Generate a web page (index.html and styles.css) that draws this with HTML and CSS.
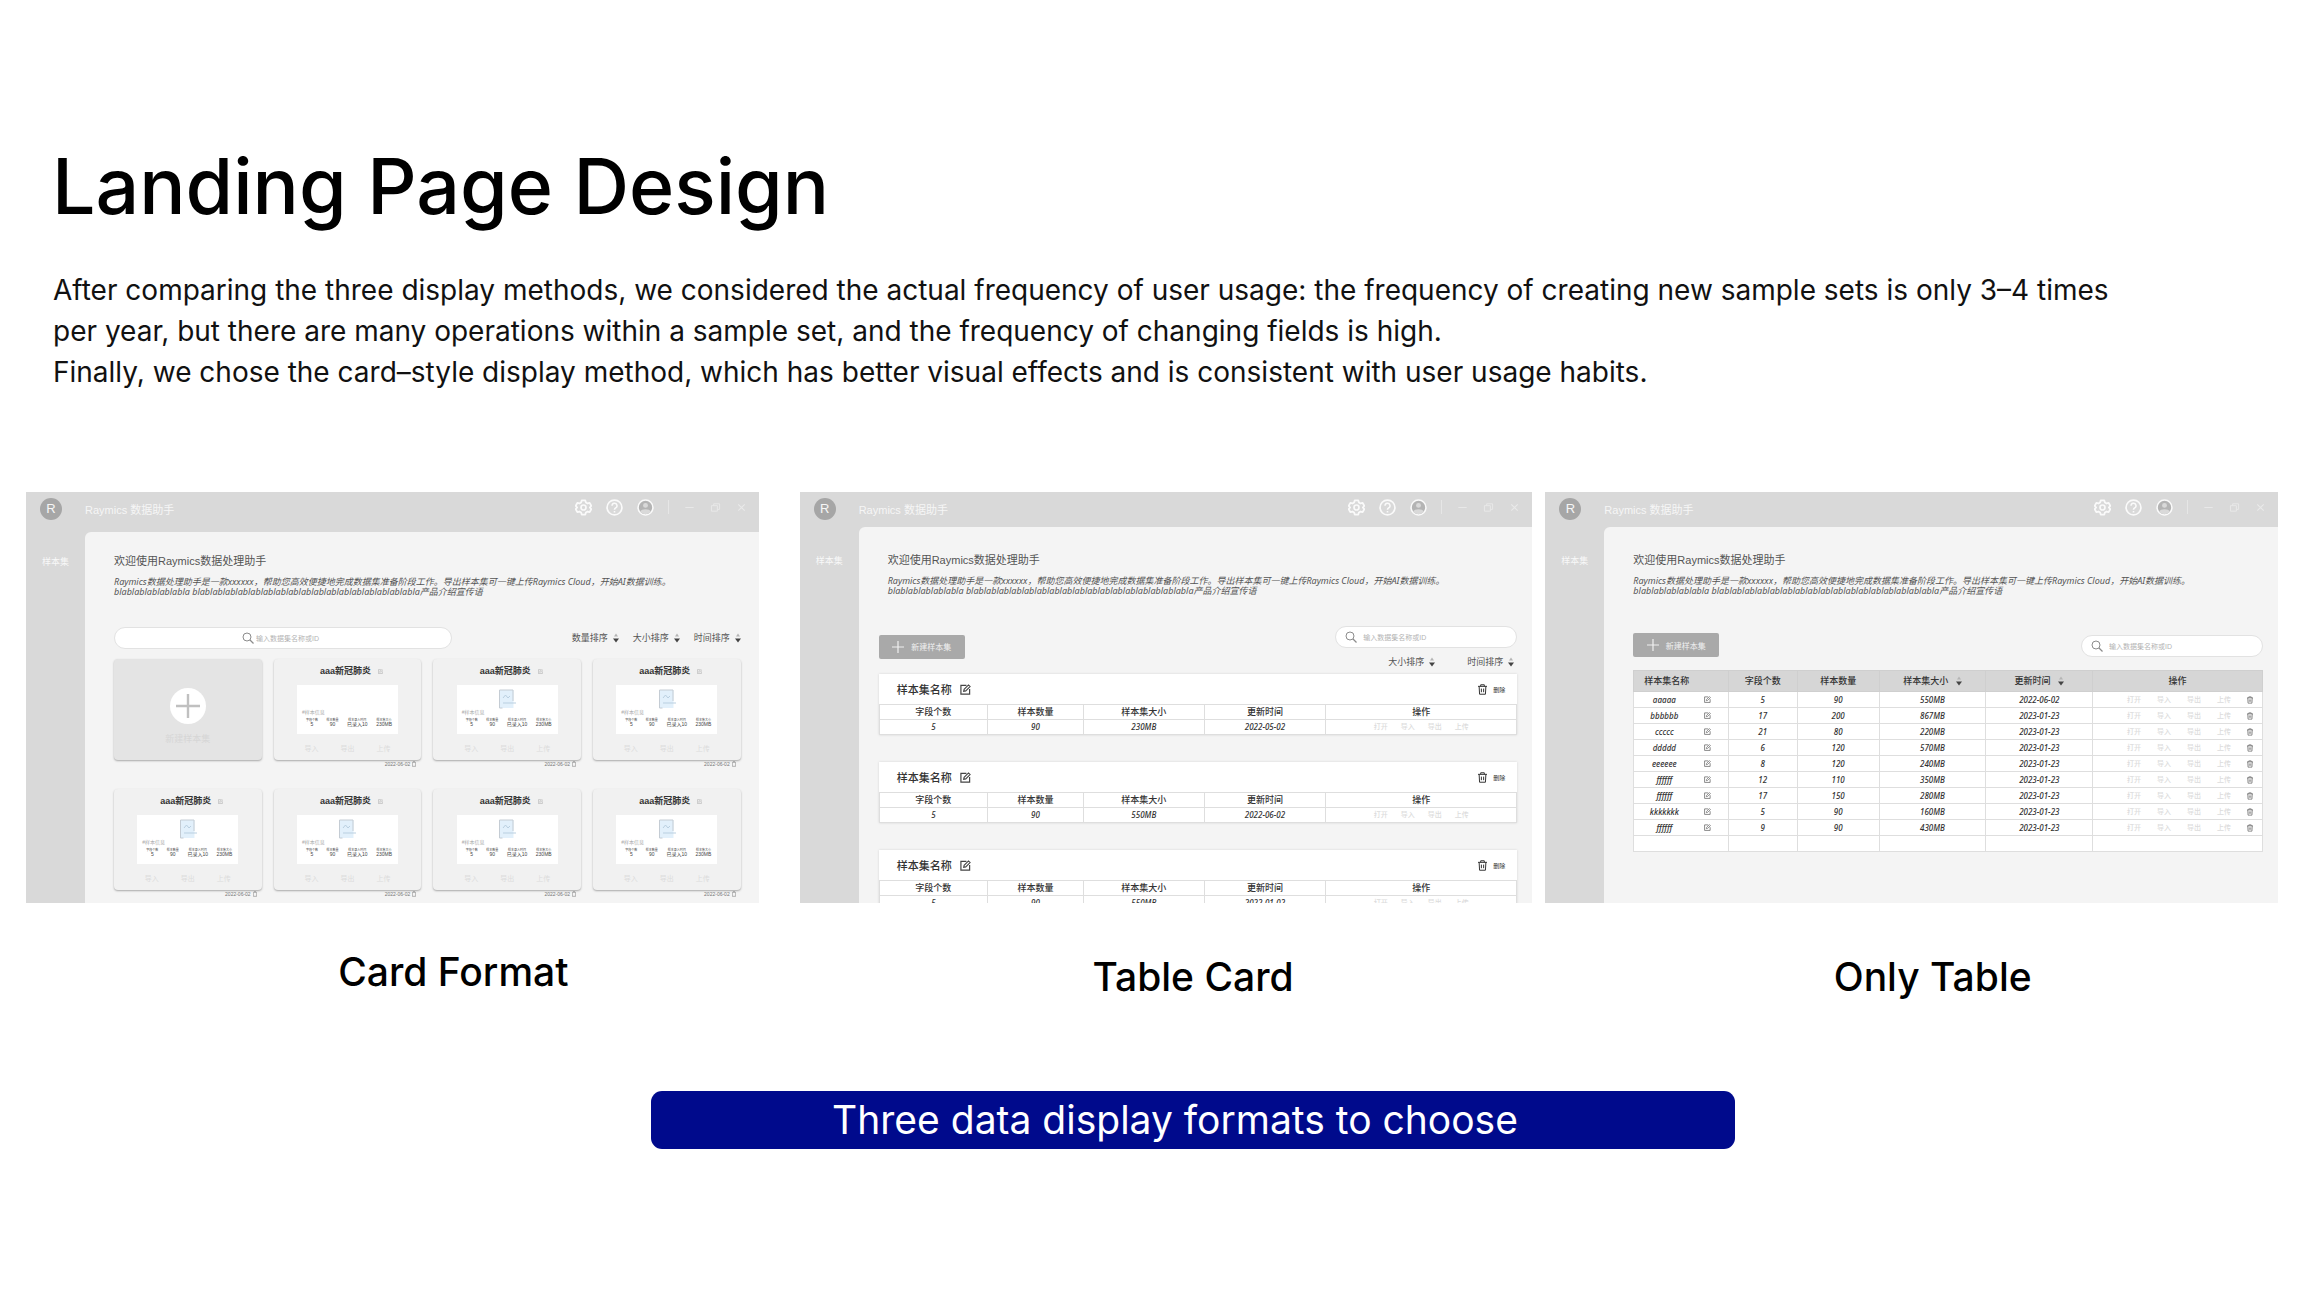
FILE: index.html
```
<!DOCTYPE html>
<html lang="en">

<head>
    <meta charset="utf-8">
    <title>Landing Page Design</title>
    <link rel="stylesheet" href="styles.css">
</head>

<body>
    <svg class="sprite" aria-hidden="true">
        <symbol id="gear" viewBox="0 0 24 24">
            <path d="M9.5 2h5l.9 3 2.2 1.3 3.1-.8 2.3 4.2L21 12l2 2.3-2.3 4.2-3.1-.8-2.2 1.3-.9 3h-5l-.9-3-2.2-1.3-3.1.8L1 14.3 3 12 1 9.7l2.3-4.2 3.1.8L8.6 5z" fill="none" stroke="currentColor" stroke-width="2.6" stroke-linejoin="round" />
            <circle cx="12" cy="12" r="3.5" fill="none" stroke="currentColor" stroke-width="2.4" />
        </symbol>
        <symbol id="help" viewBox="0 0 24 24">
            <circle cx="12" cy="12" r="10.5" fill="none" stroke="currentColor" stroke-width="2.4" />
            <path d="M8.5 9.5a3.5 3.5 0 1 1 5 3.2c-1 .5-1.5 1-1.5 2.3M12 17v2" fill="none" stroke="currentColor" stroke-width="2.2" />
        </symbol>
        <symbol id="user" viewBox="0 0 24 24">
            <circle cx="12" cy="12" r="10.5" fill="#b4b4b4" stroke="currentColor" stroke-width="2.2" />
            <circle cx="12" cy="9" r="3.5" fill="#d9d9d9" />
            <path d="M4.5 17.5c2-4 13-4 15 0-3 5-12 5-15 0z" fill="#d9d9d9" />
        </symbol>
        <symbol id="minimize" viewBox="0 0 24 24">
            <path d="M3 12h18" stroke="currentColor" stroke-width="2" />
        </symbol>
        <symbol id="restore" viewBox="0 0 24 24">
            <path d="M3 8h13v12H3zM8 8V4h13v12h-5" fill="none" stroke="currentColor" stroke-width="2" />
        </symbol>
        <symbol id="close" viewBox="0 0 24 24">
            <path d="M5 5l14 14M19 5L5 19" stroke="currentColor" stroke-width="2.4" />
        </symbol>
        <symbol id="search" viewBox="0 0 24 24">
            <circle cx="10" cy="10" r="8" fill="none" stroke="currentColor" stroke-width="2" />
            <path d="M16 16l7 7" stroke="currentColor" stroke-width="2.6" />
        </symbol>
        <symbol id="sort" viewBox="0 0 12 20">
            <path d="M6 1l4 6H2z" fill="#b4b4b4" />
            <path d="M6 19L0 11h12z" fill="#444" />
        </symbol>
        <symbol id="plus" viewBox="0 0 24 24">
            <path d="M12 0v24M0 12h24" stroke="currentColor" stroke-width="2.4" />
        </symbol>
        <symbol id="edit" viewBox="0 0 24 24">
            <path d="M14 3H2v19h19V11" fill="none" stroke="currentColor" stroke-width="2.6" />
            <path d="M8 16l1-4.5L18.5 2 22 5.5 12.5 15z" fill="none" stroke="currentColor" stroke-width="2.4" />
        </symbol>
        <symbol id="trash" viewBox="0 0 20 24">
            <path d="M0 5h20M6 5V1.5h8V5M2.5 5l1 17.5h13l1-17.5M7.5 10v8M12.5 10v8" fill="none" stroke="currentColor" stroke-width="2.2" />
        </symbol>
        <symbol id="doc" viewBox="0 0 36 40">
            <path d="M3 2h28v36H3z" fill="#e2f0fb" />
            <path d="M30 24V2H3v36h6" fill="none" stroke="#c4ccd4" stroke-width="2" />
            <path d="M10 28h26M10 18l5-6 5 6 4-4" fill="none" stroke="#b9cfe0" stroke-width="2" />
        </symbol>
        <symbol id="clipboard" viewBox="0 0 12 16">
            <path d="M1 3h10v12H1zM3 1h6" fill="none" stroke="currentColor" stroke-width="1.6" />
        </symbol>
    </svg>

    <h1>Landing Page Design</h1>
    <p class="lead">
        After comparing the three display methods, we considered the actual frequency of user usage: the frequency of creating new sample sets is only 3–4 times<br>
        per year, but there are many operations within a sample set, and the frequency of changing fields is high.<br>
        Finally, we chose the card–style display method, which has better visual effects and is consistent with user usage habits.
    </p>

    <div class="formats">
        <figure class="format format-card">
            <div class="app" lang="zh-CN">
                <header class="app-header">
                    <span class="logo">R</span>
                    <span class="app-name">Raymics 数据助手</span>
                    <div class="tools"></div>
                </header>
                <nav class="app-nav"><a href="#">样本集</a></nav>
                <section class="panel">
                    <div class="intro">
                        <h2>欢迎使用Raymics数据处理助手</h2>
                        <p>Raymics数据处理助手是一款xxxxxx，帮助您高效便捷地完成数据集准备阶段工作。导出样本集可一键上传Raymics Cloud，开始AI数据训练。<br>
                            blablablablablabla blablablablablablablablablablablablablablablablablabla产品介绍宣传语</p>
                    </div>
                    <div class="toolbar">
                        <label class="search">
                            <svg><use href="#search" /></svg>
                            <input type="text" placeholder="输入数据集名称或ID" aria-label="输入数据集名称或ID">
                        </label>
                        <div class="sorts">
                            <button class="sort">数量排序 <svg><use href="#sort" /></svg></button>
                            <button class="sort">大小排序 <svg><use href="#sort" /></svg></button>
                            <button class="sort">时间排序 <svg><use href="#sort" /></svg></button>
                        </div>
                    </div>
                    <div class="cards" id="cards">
                        <button class="add-card">
                            <span class="add-circle"><svg><use href="#plus" /></svg></span>
                            新建样本集
                        </button>
                    </div>
                </section>
            </div>
            <figcaption>Card Format</figcaption>
        </figure>

        <figure class="format format-table-card">
            <div class="app" lang="zh-CN">
                <header class="app-header">
                    <span class="logo">R</span>
                    <span class="app-name">Raymics 数据助手</span>
                    <div class="tools"></div>
                </header>
                <nav class="app-nav"><a href="#">样本集</a></nav>
                <section class="panel">
                    <div class="intro">
                        <h2>欢迎使用Raymics数据处理助手</h2>
                        <p>Raymics数据处理助手是一款xxxxxx，帮助您高效便捷地完成数据集准备阶段工作。导出样本集可一键上传Raymics Cloud，开始AI数据训练。<br>
                            blablablablablabla blablablablablablablablablablablablablablablablablabla产品介绍宣传语</p>
                    </div>
                    <div class="toolbar">
                        <button class="new-set"><svg><use href="#plus" /></svg>新建样本集</button>
                        <div class="filters">
                            <label class="search">
                                <svg><use href="#search" /></svg>
                                <input type="text" placeholder="输入数据集名称或ID" aria-label="输入数据集名称或ID">
                            </label>
                            <div class="sorts">
                                <button class="sort">大小排序 <svg><use href="#sort" /></svg></button>
                                <button class="sort">时间排序 <svg><use href="#sort" /></svg></button>
                            </div>
                        </div>
                    </div>
                    <div id="table-cards"></div>
                </section>
            </div>
            <figcaption>Table Card</figcaption>
        </figure>

        <figure class="format format-table">
            <div class="app" lang="zh-CN">
                <header class="app-header">
                    <span class="logo">R</span>
                    <span class="app-name">Raymics 数据助手</span>
                    <div class="tools"></div>
                </header>
                <nav class="app-nav"><a href="#">样本集</a></nav>
                <section class="panel">
                    <div class="intro">
                        <h2>欢迎使用Raymics数据处理助手</h2>
                        <p>Raymics数据处理助手是一款xxxxxx，帮助您高效便捷地完成数据集准备阶段工作。导出样本集可一键上传Raymics Cloud，开始AI数据训练。<br>
                            blablablablablabla blablablablablablablablablablablablablablablablablabla产品介绍宣传语</p>
                    </div>
                    <div class="toolbar">
                        <button class="new-set"><svg><use href="#plus" /></svg>新建样本集</button>
                        <label class="search">
                            <svg><use href="#search" /></svg>
                            <input type="text" placeholder="输入数据集名称或ID" aria-label="输入数据集名称或ID">
                        </label>
                    </div>
                    <table class="list">
                        <colgroup>
                            <col class="c-name">
                            <col class="c-fields">
                            <col class="c-count">
                            <col class="c-size">
                            <col class="c-date">
                            <col>
                        </colgroup>
                        <thead>
                            <tr>
                                <th class="name-head">样本集名称</th>
                                <th>字段个数</th>
                                <th>样本数量</th>
                                <th>样本集大小 <svg class="th-sort"><use href="#sort" /></svg></th>
                                <th>更新时间 <svg class="th-sort"><use href="#sort" /></svg></th>
                                <th>操作</th>
                            </tr>
                        </thead>
                        <tbody id="rows"></tbody>
                    </table>
                </section>
            </div>
            <figcaption>Only Table</figcaption>
        </figure>
    </div>

    <div class="banner-row">
        <p class="banner">Three data display formats to choose</p>
    </div>

    <script src="script.js"></script>
</body>

</html>
```
FILE: styles.css
```
* {
    box-sizing: border-box;
}

body {
    margin: 0;
    padding: 146px 26px 0;
    background-color: #fff;
    color: #000;
    font-family: Inter, "Noto Sans CJK SC", sans-serif;
}

h1,
h2,
p,
figure {
    margin: 0;
}

button {
    border: none;
    padding: 0;
    background: none;
    font-family: inherit;
    cursor: pointer;
}

svg {
    display: block;
    flex: none;
}

.sprite {
    display: none;
}

h1 {
    padding-left: 26px;
    font-size: 77px;
    line-height: 80px;
    font-weight: 500;
}

.lead {
    padding: 44px 0 0 27px;
    font-size: 28px;
    line-height: 41px;
    color: #111;
    white-space: nowrap;
}

/* three mock windows */
.formats {
    display: flex;
    align-items: flex-start;
    margin-top: 99px;
}

.format {
    flex: 1;
    min-width: 0;
}

.format-table-card {
    margin-left: 41px;
}

.format-table {
    margin-left: 13px;
}

figcaption {
    padding-top: 51px;
    font-size: 39px;
    line-height: 46px;
    font-weight: 500;
    text-align: center;
}

.format-card figcaption {
    padding-top: 46px;
    padding-left: 122px;
}

.format-table-card figcaption {
    padding-left: 54px;
}

.format-table figcaption {
    padding-left: 42px;
}

.app {
    display: grid;
    grid-template-columns: 59px 1fr;
    grid-template-rows: 35px 1fr;
    aspect-ratio: 732 / 411;
    overflow: hidden;
    background-color: #d9d9d9;
    font-family: "Liberation Sans", "Noto Sans CJK SC", sans-serif;
}

.format-card .app {
    grid-template-rows: 40px 1fr;
}

.app-header {
    grid-column: 1 / 3;
    display: flex;
    align-items: flex-start;
    padding: 6px 12px 0 14px;
    color: #f6f6f6;
}

.logo {
    width: 22px;
    height: 22px;
    border-radius: 50%;
    background-color: #a6a6a6;
    font-size: 13px;
    line-height: 22px;
    text-align: center;
}

.app-name {
    margin-left: 23px;
    font-size: 11px;
    line-height: 24px;
}

.tools {
    display: flex;
    align-items: center;
    gap: 14px;
    height: 18px;
    margin-left: auto;
}

.tools button {
    color: #fafafa;
}

.tools svg {
    width: 17px;
    height: 17px;
}

.tools .window-button {
    margin-left: 1px;
    color: #e9e9e9;
}

.tools .window-button svg {
    width: 11px;
    height: 11px;
}

.divider {
    width: 1px;
    height: 14px;
    background-color: #e6e6e6;
}

.app-nav {
    padding-top: 27px;
    text-align: center;
    font-size: 9px;
    line-height: 14px;
}

.format-card .app-nav {
    padding-top: 23px;
}

.app-nav a {
    color: #f8f8f8;
    text-decoration: none;
}

.panel {
    min-width: 0;
    min-height: 0;
    padding: 25px 15px 0 29px;
    border-top-left-radius: 6px;
    background-color: #f4f4f4;
}

.format-card .panel {
    padding: 21px 18px 0 29px;
}

.format-table-card .panel {
    padding-left: 20px;
}

.format-table-card .intro {
    padding-left: 9px;
}

.intro {
    color: #555;
    white-space: nowrap;
}

.intro h2 {
    font-size: 11px;
    line-height: 16px;
    font-weight: normal;
}

.intro p {
    margin-top: 8px;
    font-family: "Noto Sans", "Noto Sans CJK SC", sans-serif;
    font-size: 9px;
    font-style: italic;
    line-height: 10px;
}

/* toolbar */
.toolbar {
    display: flex;
    align-items: center;
    justify-content: space-between;
    padding: 30px 0 10px;
}

.format-table-card .toolbar {
    padding-bottom: 7px;
}

.format-table .toolbar {
    align-items: flex-end;
    padding: 37px 0 13px;
}

.search {
    display: flex;
    align-items: center;
    gap: 6px;
    width: 182px;
    height: 22px;
    padding: 0 9px;
    border: 1px solid #e2e2e2;
    border-radius: 11px;
    background-color: #fff;
    color: #8c8c8c;
}

.format-card .search {
    justify-content: center;
    gap: 2px;
    width: 338px;
}

.search svg {
    width: 12px;
    height: 12px;
}

.search input {
    width: 68px;
    border: none;
    padding: 0;
    background: none;
    font-family: inherit;
    font-size: 7px;
    outline: none;
}

.search input::placeholder {
    color: #b4b4b4;
}

.sorts {
    display: flex;
    justify-content: flex-end;
    gap: 14px;
}

.format-table-card .sorts {
    gap: 32px;
    padding: 9px 3px 0 0;
}

.sort {
    display: flex;
    align-items: center;
    gap: 5px;
    color: #555;
    font-size: 9px;
    line-height: 10px;
}

.sort svg {
    width: 6px;
    height: 10px;
}

.new-set {
    display: flex;
    align-items: center;
    justify-content: center;
    gap: 7px;
    width: 86px;
    height: 24px;
    border-radius: 2px;
    background-color: #a9a9a9;
    color: #f0f0f0;
    font-size: 8px;
}

.new-set svg {
    width: 12px;
    height: 12px;
}

/* card format */
.cards {
    display: grid;
    grid-template-columns: repeat(4, 1fr);
    gap: 12px;
}

.add-card,
.card {
    height: 101px;
    border-radius: 4px;
    box-shadow: 0 1px 2px #a8a8a8;
}

.add-card {
    display: flex;
    flex-direction: column;
    align-items: center;
    gap: 8px;
    padding-top: 29px;
    background-color: #e4e4e4;
    color: #d6d6d6;
    font-size: 9px;
}

.add-circle {
    padding: 6px;
    border-radius: 50%;
    background-color: #fff;
    color: #c0c0c0;
}

.add-circle svg {
    width: 24px;
    height: 24px;
}

.card {
    display: flex;
    flex-direction: column;
    align-items: center;
    background-color: #f1f1f1;
}

.card h3 {
    display: flex;
    align-items: center;
    gap: 7px;
    margin: 5px 0 7px 8px;
    color: #333;
    font-size: 9px;
    line-height: 14px;
}

.card h3 svg {
    width: 5px;
    height: 5px;
    color: #aaa;
}

.info {
    display: grid;
    grid-template-rows: 24px 7px 1fr;
    width: 101px;
    height: 49px;
    padding: 0 5px;
    background-color: #fff;
}

.info svg {
    width: 18px;
    height: 20px;
    margin: 4px auto 0;
}

.info-label {
    color: #aaa;
    font-size: 5px;
    line-height: 6px;
}

.stats {
    display: flex;
    justify-content: space-between;
    margin: 0;
    padding: 2px 1px 0 4px;
    color: #444;
    text-align: center;
}

.stats dt {
    font-size: 3px;
    line-height: 4px;
}

.stats dd {
    margin: 0;
    font-size: 5px;
    line-height: 5px;
}

.card-links {
    display: flex;
    gap: 22px;
    padding-top: 9px;
    font-size: 7px;
    line-height: 11px;
}

.card-links a,
.ops a {
    color: #dcdcdc;
    text-decoration: none;
}

.card-date {
    display: flex;
    justify-content: flex-end;
    gap: 2px;
    height: 17px;
    padding: 1px 5px 0 0;
    color: #777;
    font-size: 5px;
    line-height: 7px;
}

.card-date svg {
    width: 4px;
    height: 6px;
}

/* tables */
table {
    width: 100%;
    border-collapse: collapse;
    table-layout: fixed;
    background-color: #fff;
}

th,
td {
    padding: 0;
    border: 1px solid #dedede;
    text-align: center;
    font-weight: 500;
}

th {
    color: #333;
    font-size: 9px;
    line-height: 15px;
}

td {
    color: #333;
    font-family: "Noto Sans", "Noto Sans CJK SC", sans-serif;
    font-size: 8px;
    font-style: italic;
    line-height: 15px;
}

.table-card {
    margin-bottom: 27px;
    box-shadow: 0 0 2px #d4d4d4;
}

.table-card th,
.table-card td {
    line-height: 14px;
}

.table-card-head {
    display: flex;
    align-items: center;
    height: 30px;
    padding: 0 12px 0 18px;
    background-color: #fff;
    color: #333;
}

.table-card-head h3 {
    margin: 0 8px 0 0;
    font-size: 11px;
    font-weight: 500;
}

.table-card-head .edit svg {
    width: 11px;
    height: 11px;
}

.delete {
    display: flex;
    align-items: center;
    gap: 6px;
    margin-left: auto;
    color: #333;
    font-size: 6px;
}

.delete svg {
    width: 9px;
    height: 11px;
}

.edit {
    color: #444;
}

.t-fields {
    width: 17%;
}

.t-count {
    width: 15%;
}

.t-size {
    width: 19%;
}

.t-date {
    width: 19%;
}

.ops {
    display: flex;
    justify-content: center;
    gap: 13px;
    font-size: 7px;
    font-style: normal;
}

.c-name {
    width: 15%;
}

.c-fields {
    width: 11%;
}

.c-count {
    width: 13%;
}

.c-size {
    width: 17%;
}

.c-date {
    width: 17%;
}

.list th {
    height: 21px;
    border-color: #cfcfcf;
    background-color: #d6d6d6;
}

.list th.name-head {
    padding-left: 10px;
    text-align: left;
}

.list td {
    height: 16px;
}

.th-sort {
    display: inline-block;
    width: 6px;
    height: 10px;
    margin-left: 5px;
    vertical-align: middle;
}

.name-cell {
    display: grid;
    grid-template-columns: 60px 26px;
    align-items: center;
}

.name-cell svg {
    width: 7px;
    height: 7px;
    margin: 0 auto;
    color: #666;
}

.list .ops {
    align-items: center;
    justify-content: flex-end;
    gap: 16px;
    padding-right: 9px;
}

.list .ops svg {
    width: 6px;
    height: 8px;
    color: #555;
}

/* banner */
.banner-row {
    padding: 91px 0 60px 82px;
}

.banner {
    width: 1084px;
    max-width: 100%;
    margin: 0 auto;
    padding-right: 36px;
    border-radius: 11px;
    background-color: #000a8c;
    color: #fff;
    font-size: 39px;
    line-height: 58px;
    text-align: center;
}
```
FILE: script.js
```
const icon = (name) => `<svg><use href="#${name}" /></svg>`;

// window controls are the same in every mock window
document.querySelectorAll(".tools").forEach((el) => {
    el.innerHTML = `
        <button aria-label="设置">${icon("gear")}</button>
        <button aria-label="帮助">${icon("help")}</button>
        <button aria-label="用户">${icon("user")}</button>
        <span class="divider"></span>
        <button class="window-button" aria-label="最小化">${icon("minimize")}</button>
        <button class="window-button" aria-label="还原">${icon("restore")}</button>
        <button class="window-button" aria-label="关闭">${icon("close")}</button>`;
});

const links = (names) => names.map((name) => `<a href="#">${name}</a>`).join("");

// the first sample set has no preview yet
const cards = document.getElementById("cards");
for (let i = 0; i < 7; i++) {
    cards.insertAdjacentHTML("beforeend", `
        <div>
            <article class="card">
                <h3>aaa新冠肺炎 ${icon("edit")}</h3>
                <div class="info">
                    <div>${i === 0 ? "" : icon("doc")}</div>
                    <div class="info-label">#样本信息</div>
                    <dl class="stats">
                        <div><dt>字段个数</dt><dd>5</dd></div>
                        <div><dt>样本数量</dt><dd>90</dd></div>
                        <div><dt>样本录入时间</dt><dd>已录入10</dd></div>
                        <div><dt>样本集大小</dt><dd>230MB</dd></div>
                    </dl>
                </div>
                <div class="card-links">${links(["导入", "导出", "上传"])}</div>
            </article>
            <div class="card-date">2022-06-02 ${icon("clipboard")}</div>
        </div>`);
}

const tableCards = [
    [5, 90, "230MB", "2022-05-02"],
    [5, 90, "550MB", "2022-06-02"],
    [5, 90, "550MB", "2022-01-02"]
];

document.getElementById("table-cards").innerHTML = tableCards.map((row) => `
    <article class="table-card">
        <div class="table-card-head">
            <h3>样本集名称</h3>
            <button class="edit" aria-label="编辑">${icon("edit")}</button>
            <button class="delete">${icon("trash")}删除</button>
        </div>
        <table>
            <tr>
                <th class="t-fields">字段个数</th>
                <th class="t-count">样本数量</th>
                <th class="t-size">样本集大小</th>
                <th class="t-date">更新时间</th>
                <th>操作</th>
            </tr>
            <tr>
                ${row.map((value) => `<td>${value}</td>`).join("")}
                <td><div class="ops">${links(["打开", "导入", "导出", "上传"])}</div></td>
            </tr>
        </table>
    </article>`).join("");

const rows = [
    ["aaaaa", 5, 90, "550MB", "2022-06-02"],
    ["bbbbbb", 17, 200, "867MB", "2023-01-23"],
    ["ccccc", 21, 80, "220MB", "2023-01-23"],
    ["ddddd", 6, 120, "570MB", "2023-01-23"],
    ["eeeeee", 8, 120, "240MB", "2023-01-23"],
    ["ffffff", 12, 110, "350MB", "2023-01-23"],
    ["ffffff", 17, 150, "280MB", "2023-01-23"],
    ["kkkkkkk", 5, 90, "160MB", "2023-01-23"],
    ["ffffff", 9, 90, "430MB", "2023-01-23"]
];

document.getElementById("rows").innerHTML = rows.map(([name, ...values]) => `
    <tr>
        <td><div class="name-cell"><span>${name}</span>${icon("edit")}</div></td>
        ${values.map((value) => `<td>${value}</td>`).join("")}
        <td><div class="ops">${links(["打开", "导入", "导出", "上传"])}${icon("trash")}</div></td>
    </tr>`).join("") + "<tr><td></td><td></td><td></td><td></td><td></td><td></td></tr>";
```
